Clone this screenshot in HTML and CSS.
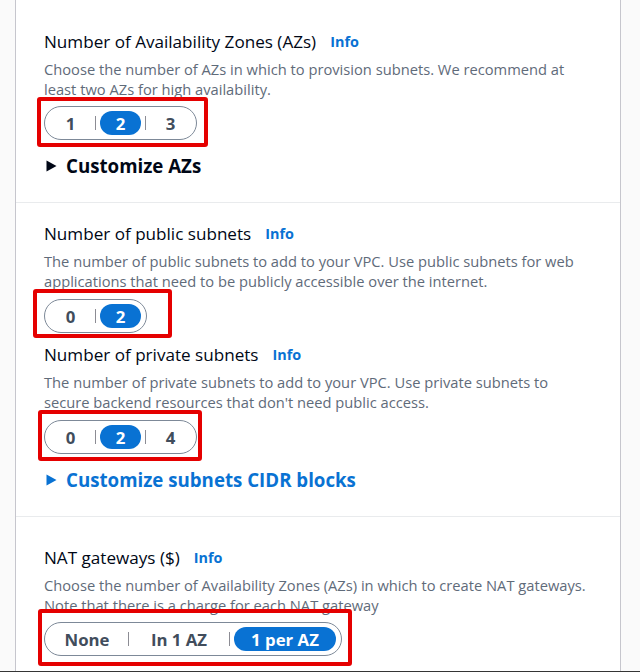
FILE: index.html
```html
<!DOCTYPE html>
<html lang="en">
<head>
<meta charset="utf-8">
<title>VPC settings</title>
<link rel="stylesheet" href="styles.css">
</head>
<body>
<div class="page">
  <div class="panel">
    <section class="section section-first">
      <div class="label-row">
        <span class="label">Number of Availability Zones (AZs)</span>
        <a class="info" href="#">Info</a>
      </div>
      <p class="desc">Choose the number of AZs in which to provision subnets. We recommend at least two AZs for high availability.</p>
      <div class="seg-wrap">
        <div class="seg">
          <span class="opt w41">1</span>
          <span class="div"></span>
          <span class="opt w41 on">2</span>
          <span class="div"></span>
          <span class="opt w41">3</span>
        </div>
        <span class="mark mark-az"></span>
      </div>
      <div class="expander">
        <svg class="caret" width="11" height="12" viewBox="0 0 11 12"><polygon points="0.5,0.5 10.5,6 0.5,11.5" fill="#000716"/></svg>
        <span class="exp-text">Customize AZs</span>
      </div>
    </section>

    <section class="section">
      <div class="label-row">
        <span class="label">Number of public subnets</span>
        <a class="info" href="#">Info</a>
      </div>
      <p class="desc">The number of public subnets to add to your VPC. Use public subnets for web applications that need to be publicly accessible over the internet.</p>
      <div class="seg-wrap">
        <div class="seg">
          <span class="opt w41">0</span>
          <span class="div"></span>
          <span class="opt w41 on">2</span>
        </div>
        <span class="mark mark-pub"></span>
      </div>

      <div class="label-row second">
        <span class="label">Number of private subnets</span>
        <a class="info" href="#">Info</a>
      </div>
      <p class="desc">The number of private subnets to add to your VPC. Use private subnets to secure backend resources that don't need public access.</p>
      <div class="seg-wrap">
        <div class="seg">
          <span class="opt w41">0</span>
          <span class="div"></span>
          <span class="opt w41 on">2</span>
          <span class="div"></span>
          <span class="opt w41">4</span>
        </div>
        <span class="mark mark-priv"></span>
      </div>
      <div class="expander blue">
        <svg class="caret" width="11" height="12" viewBox="0 0 11 12"><polygon points="0.5,0.5 10.5,6 0.5,11.5" fill="#0972d3"/></svg>
        <span class="exp-text">Customize subnets CIDR blocks</span>
      </div>
    </section>

    <section class="section section-nat">
      <div class="label-row">
        <span class="label">NAT gateways ($)</span>
        <a class="info" href="#">Info</a>
      </div>
      <p class="desc">Choose the number of Availability Zones (AZs) in which to create NAT gateways. Note that there is a charge for each NAT gateway</p>
      <div class="seg-wrap">
        <div class="seg">
          <span class="opt w74">None</span>
          <span class="div"></span>
          <span class="opt w92">In 1 AZ</span>
          <span class="div"></span>
          <span class="opt w102 on">1 per AZ</span>
        </div>
        <span class="mark mark-nat"></span>
      </div>
    </section>
  </div>
</div>
</body>
</html>
```

FILE: styles.css
```css
* { box-sizing: border-box; }

html, body {
  margin: 0;
  padding: 0;
  background: #fafafa;
}

body {
  font-family: "Open Sans", "Noto Sans", sans-serif;
  color: #000716;
}

.page {
  width: 640px;
  height: 672px;
  overflow: hidden;
  border-bottom: 1px solid #353535;
  padding-left: 15px;
  padding-right: 19px;
}

.panel {
  height: 100%;
  background: #ffffff;
  border-left: 1px solid #c6c6cd;
  border-right: 1px solid #c6c6cd;
}

.section {
  padding: 20px 28px 24px 28px;
  border-bottom: 1px solid #e9ebed;
}

.section-first {
  padding-top: 31px;
}

.section-nat {
  padding-top: 30px;
  border-bottom: none;
}

.label-row {
  display: flex;
  align-items: center;
  gap: 14px;
  height: 22px;
}

.label-row.second {
  margin-top: 11px;
}

.label {
  font-size: 17.1px;
  line-height: 22px;
  color: #000716;
}

.info {
  font-size: 14.4px;
  font-weight: 700;
  color: #0972d3;
  text-decoration: none;
  line-height: 22px;
}

.desc {
  margin: 6px 0 0 0;
  font-size: 14.7px;
  line-height: 20px;
  color: #5f6b7a;
}

.seg-wrap {
  position: relative;
  display: inline-block;
  margin-top: 8px;
  vertical-align: top;
}

.section-first .seg-wrap {
  margin-top: 7px;
}

.section-nat .seg-wrap {
  margin-top: 7px;
}

.seg {
  display: flex;
  align-items: center;
  gap: 4px;
  height: 34px;
  padding: 0 5px;
  border: 1px solid #7d8998;
  border-radius: 17px;
  background: #ffffff;
}

.opt {
  display: flex;
  align-items: center;
  justify-content: center;
  height: 24px;
  border-radius: 12px;
  font-size: 16.8px;
  font-weight: 700;
  color: #414d5c;
}

.opt.on {
  background: #0972d3;
  color: #ffffff;
}

.w41 { width: 41px; }
.w74 { width: 74px; }
.w92 { width: 92px; }
.w102 { width: 102px; }

.div {
  width: 1px;
  height: 14px;
  background: #8c8c94;
}

.mark {
  position: absolute;
  border: 4px solid #e50000;
  border-radius: 3px;
  pointer-events: none;
}

.mark-az { left: -7px; top: -9px; right: -11px; bottom: -7px; }
.mark-pub { left: -11px; top: -10px; right: -25px; bottom: -5px; }
.mark-priv { left: -6px; top: -10px; right: -5px; bottom: -7px; }
.mark-nat { left: -6px; top: -13px; right: -10px; bottom: -10px; }

.expander {
  display: flex;
  align-items: center;
  gap: 9px;
  height: 24px;
  margin-top: 14px;
  padding-left: 2px;
}

.caret {
  flex: none;
}

.exp-text {
  font-size: 18.7px;
  font-weight: 700;
  line-height: 24px;
  color: #000716;
}

.expander.blue .exp-text {
  color: #0972d3;
}
```
